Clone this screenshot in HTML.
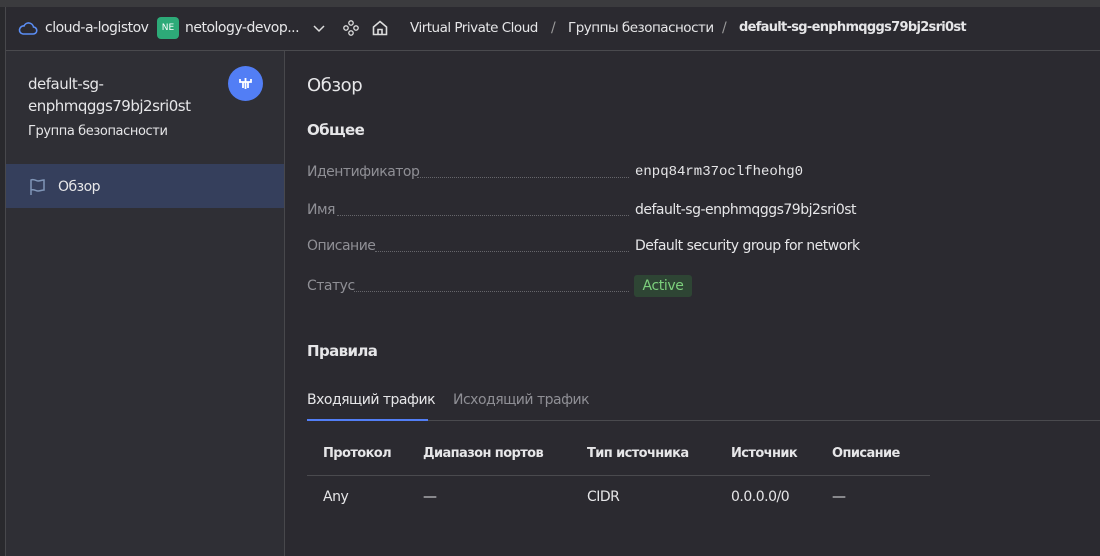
<!DOCTYPE html>
<html><head><meta charset="utf-8"><style>
*{box-sizing:border-box;margin:0;padding:0}
body{width:1100px;height:556px;overflow:hidden;background:#2b2a30;font-family:"DejaVu Sans","Liberation Sans",sans-serif;color:#e6e6e8;position:relative;font-size:14px}
.abs{position:absolute;white-space:nowrap}
#top{left:0;top:0;width:1100px;height:7px;background:#3b3b3e}
#lstrip{left:0;top:7px;width:6px;height:549px;background:#29292d;border-right:1px solid #48484c}
#hdr{left:6px;top:7px;width:1094px;height:44px;background:#2b2a30;border-bottom:1px solid #4a4a4e}
#side{left:6px;top:51px;width:279px;height:505px;background:#2f2f35;border-right:1px solid #48484c}
.t14{font-size:14px;letter-spacing:-0.5px}
.lbl{color:#8f8f95;font-size:14px;letter-spacing:-0.5px}
.dots{position:absolute;border-bottom:1px dotted #66666b;height:1px}
.th{font-size:13px;font-weight:bold;letter-spacing:-0.6px}
</style></head><body>
<div class="abs" id="top"></div>
<div class="abs" id="lstrip"></div>
<div class="abs" id="hdr"></div>
<svg class="abs" style="left:18px;top:20px" width="20" height="16" viewBox="0 0 20 16"><path d="M5 14h10a3.5 3.5 0 0 0 .5-7A5 5 0 0 0 6 6a4 4 0 0 0-1 8z" fill="none" stroke="#5b8ef5" stroke-width="1.6"/></svg>
<div class="abs t14" style="left:45px;top:20px">cloud-a-logistov</div>
<div class="abs" style="left:157px;top:17px;width:22px;height:22px;border-radius:4px;background:#2daa78;color:#fff;font-size:9px;line-height:22px;text-align:center">NE</div>
<div class="abs t14" style="left:185px;top:20px">netology-devop...</div>
<svg class="abs" style="left:312px;top:23px" width="14" height="10"><path d="M2 3l5 5 5-5" fill="none" stroke="#ddd" stroke-width="1.5"/></svg>
<svg class="abs" style="left:342px;top:19px" width="18" height="18" viewBox="0 0 18 18" fill="none" stroke="#ddd" stroke-width="1.3"><circle cx="9" cy="4" r="2.2"/><circle cx="4" cy="9" r="2.2"/><circle cx="14" cy="9" r="2.2"/><circle cx="9" cy="14" r="2.2"/></svg>
<svg class="abs" style="left:371px;top:19px" width="18" height="18" viewBox="0 0 18 18" fill="none" stroke="#ddd" stroke-width="1.6"><path d="M2.5 8L9 2.5 15.5 8v7.5h-13z"/><path d="M7 15.5v-5h4v5"/></svg>
<div class="abs t14" style="left:410px;top:20px;font-size:13.5px">Virtual Private Cloud</div>
<div class="abs t14" style="left:551px;top:20px;color:#999">/</div>
<div class="abs t14" style="left:568px;top:20px;font-size:13.5px">Группы безопасности</div>
<div class="abs t14" style="left:722px;top:20px;color:#999">/</div>
<div class="abs" style="left:739px;top:20px;font-weight:bold;font-size:13px;letter-spacing:-0.7px">default-sg-enphmqggs79bj2sri0st</div>
<div class="abs" id="side"></div>
<div class="abs" style="left:28px;top:73px;font-size:15px;line-height:22px;letter-spacing:-0.5px">default-sg-<br>enphmqggs79bj2sri0st</div>
<div class="abs" style="left:28px;top:124px;font-size:13px;letter-spacing:-0.4px">Группа безопасности</div>
<div class="abs" style="left:228px;top:66px;width:35px;height:35px;border-radius:50%;background:#527ef5"></div>
<svg class="abs" style="left:237px;top:75px" width="17" height="17" viewBox="0 0 17 17" fill="none" stroke="#fff" stroke-width="1.8"><path d="M3 4v3h11V4M8.5 3v11M6 7v6M11 7v6"/></svg>
<div class="abs" style="left:6px;top:164px;width:278px;height:44px;background:#353f5c"></div>
<svg class="abs" style="left:29px;top:178px" width="18" height="18" viewBox="0 0 18 18" fill="none" stroke="#8096b8" stroke-width="1.5"><path d="M2 17V2c3-1.5 5 1 7 1s4-1 6-1v10c-2 0-4 1-6 1s-4-2-7-1"/></svg>
<div class="abs t14" style="left:58px;top:179px">Обзор</div>
<div class="abs" style="left:307px;top:75px;font-size:18px;letter-spacing:-0.4px">Обзор</div>
<div class="abs" style="left:307px;top:121px;font-size:15px;font-weight:bold;letter-spacing:-0.6px">Общее</div>
<div class="abs lbl" style="left:307px;top:164px">Идентификатор</div><div class="dots" style="left:417px;top:177px;width:212px"></div>
<div class="abs" style="left:635px;top:164px;font-family:'Liberation Mono',monospace;font-size:14px">enpq84rm37oclfheohg0</div>
<div class="abs lbl" style="left:307px;top:202px">Имя</div><div class="dots" style="left:337px;top:215px;width:292px"></div>
<div class="abs t14" style="left:635px;top:202px">default-sg-enphmqggs79bj2sri0st</div>
<div class="abs lbl" style="left:307px;top:238px">Описание</div><div class="dots" style="left:375px;top:251px;width:254px"></div>
<div class="abs t14" style="left:635px;top:238px">Default security group for network</div>
<div class="abs lbl" style="left:307px;top:278px">Статус</div><div class="dots" style="left:354px;top:291px;width:275px"></div>
<div class="abs" style="left:634px;top:275px;width:58px;height:22px;border-radius:3px;background:#2e4534;color:#7ccf7c;font-size:14px;line-height:22px;text-align:center;letter-spacing:-0.4px">Active</div>
<div class="abs" style="left:307px;top:342px;font-size:15px;font-weight:bold;letter-spacing:-0.6px">Правила</div>
<div class="abs t14" style="left:307px;top:392px">Входящий трафик</div>
<div class="abs t14" style="left:453px;top:392px;color:#8f8f95">Исходящий трафик</div>
<div class="abs" style="left:307px;top:420px;width:793px;height:1px;background:#4a4a4e"></div>
<div class="abs" style="left:307px;top:419px;width:121px;height:2px;background:#527ef5"></div>
<div class="abs th" style="left:323px;top:446px">Протокол</div>
<div class="abs th" style="left:423px;top:446px">Диапазон портов</div>
<div class="abs th" style="left:587px;top:446px">Тип источника</div>
<div class="abs th" style="left:731px;top:446px">Источник</div>
<div class="abs th" style="left:832px;top:446px">Описание</div>
<div class="abs" style="left:307px;top:475px;width:623px;height:1px;background:#4a4a4e"></div>
<div class="abs t14" style="left:323px;top:489px">Any</div>
<div class="abs t14" style="left:423px;top:489px">—</div>
<div class="abs t14" style="left:587px;top:489px">CIDR</div>
<div class="abs t14" style="left:731px;top:489px">0.0.0.0/0</div>
<div class="abs t14" style="left:832px;top:489px">—</div>
</body></html>
